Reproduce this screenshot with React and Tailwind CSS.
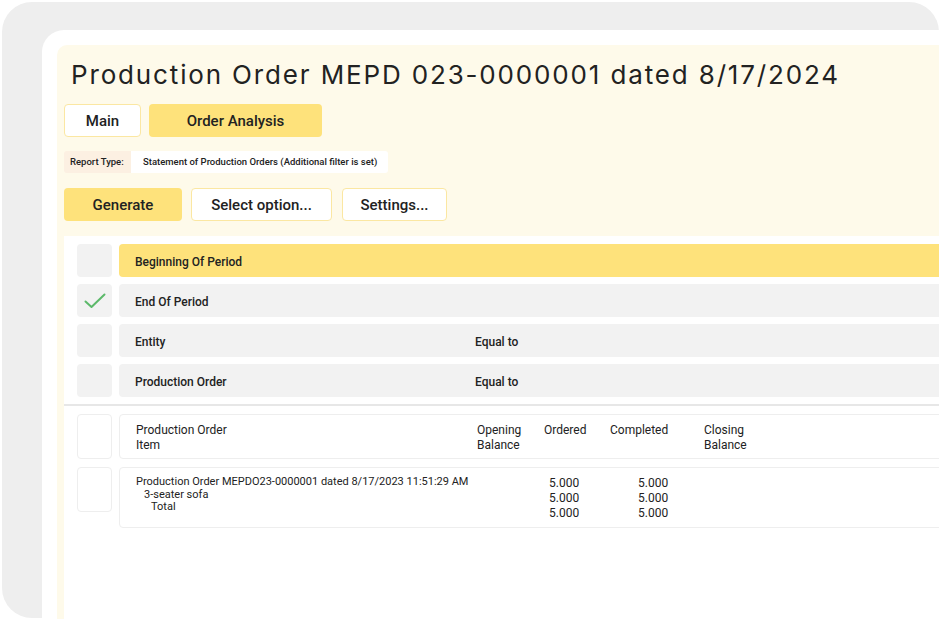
import React from "react";

const rows = [
  { label: "Beginning Of Period", active: true },
  { label: "End Of Period", checked: true },
  { label: "Entity", cond: "Equal to" },
  { label: "Production Order", cond: "Equal to" },
];

const Check = () => (
  <svg width="22" height="16" viewBox="0 0 22 16" fill="none">
    <path d="M1.5 8.5 L7.5 14 L20.5 1.5" stroke="#5cb96a" strokeWidth="2" strokeLinecap="round" strokeLinejoin="round" />
  </svg>
);

const App = () => {
  return (
    <div className="w-[939px] h-[619px] overflow-hidden bg-white pt-[2px] pl-[2px] font-['Roboto',sans-serif] text-[#222]">
      <div className="w-[937px] h-[616px] rounded-[30px] bg-[#eeeeee] pt-[28px] pl-[40px]">
        <div className="w-[900px] h-[600px] rounded-tl-[22px] bg-white pt-[15px] pl-[15px]">
          <div className="w-[890px] h-[580px] rounded-tl-[10px] bg-[#fefaea] pt-[14px] pl-[7px]">
            <h1 className="pl-[7px] font-['Inter',sans-serif] text-[26px] leading-[32px] font-normal tracking-[1.85px] text-[#222]">
              Production Order MEPD 023-0000001 dated 8/17/2024
            </h1>

            <div className="mt-[13px] flex gap-[8px]">
              <button className="w-[77px] h-[33px] pt-[2px] rounded-[4px] border border-[#fbe7a2] bg-white text-[15px] font-medium">
                Main
              </button>
              <button className="w-[173px] h-[33px] pt-[2px] rounded-[4px] bg-[#fee27b] text-[15px] font-medium">
                Order Analysis
              </button>
            </div>

            <div className="mt-[14px] flex h-[22px] text-[9.5px] font-medium">
              <div className="w-[67px] flex items-center pl-[6px] bg-[#fcf0e2] rounded-l-[3px]">Report Type:</div>
              <div className="w-[257px] flex items-center pl-[12px] bg-white rounded-r-[3px] whitespace-nowrap">
                Statement of Production Orders (Additional filter is set)
              </div>
            </div>

            <div className="mt-[15px] flex">
              <button className="w-[118px] h-[33px] pt-[2px] rounded-[4px] bg-[#fee27b] text-[15px] font-medium">
                Generate
              </button>
              <button className="ml-[9px] w-[141px] h-[33px] pt-[2px] rounded-[4px] border border-[#fbe7a2] bg-white text-[15px] font-medium">
                Select option...
              </button>
              <button className="ml-[10px] w-[105px] h-[33px] pt-[2px] rounded-[4px] border border-[#fbe7a2] bg-white text-[15px] font-medium">
                Settings...
              </button>
            </div>

            <div className="mt-[15px] h-[400px] bg-white pt-[8px]">
              <div className="flex flex-col gap-[7px] pl-[13px]">
                {rows.map((r) => (
                  <div key={r.label} className="flex gap-[7px]">
                    <div className="w-[35px] h-[33px] rounded-[4px] bg-[#f2f2f2] flex items-center justify-center">
                      {r.checked && <Check />}
                    </div>
                    <div
                      className={
                        r.active
                          ? "flex-1 h-[33px] pt-[2px] rounded-l-[4px] bg-[#fee27b] flex items-center pl-[16px] text-[12px] font-medium"
                          : "flex-1 h-[33px] pt-[2px] rounded-l-[4px] bg-[#f2f2f2] flex items-center pl-[16px] text-[12px] font-medium"
                      }
                    >
                      <span className="w-[340px]">{r.label}</span>
                      {r.cond && <span>{r.cond}</span>}
                    </div>
                  </div>
                ))}
              </div>

              <div className="mt-[7px] h-[2px] bg-[#e7e7e7]" />

              <div className="mt-[8px] pl-[13px] flex gap-[7px]">
                <div className="w-[35px] h-[45px] rounded-[4px] border border-[#eeeeee]" />
                <div className="flex-1 h-[45px] rounded-l-[4px] border border-[#eeeeee] pl-[16px] pt-[8px] flex text-[12px] leading-[15px]">
                  <div className="w-[341px]">Production Order<br />Item</div>
                  <div className="w-[67px]">Opening<br />Balance</div>
                  <div className="w-[66px]">Ordered</div>
                  <div className="w-[94px]">Completed</div>
                  <div>Closing<br />Balance</div>
                </div>
              </div>

              <div className="mt-[8px] pl-[13px] flex gap-[7px] items-start">
                <div className="w-[35px] h-[45px] rounded-[4px] border border-[#eeeeee]" />
                <div className="flex-1 h-[61px] rounded-l-[4px] border border-[#eeeeee] pl-[16px] pt-[8px] flex">
                  <div className="w-[408px] text-[11px] leading-[12.5px]">
                    <div>Production Order MEPDO23-0000001 dated 8/17/2023 11:51:29 AM</div>
                    <div className="pl-[8px]">3-seater sofa</div>
                    <div className="pl-[15px]">Total</div>
                  </div>
                  <div className="w-[66px] pl-[5px] text-[12px] leading-[15px]">
                    <div>5.000</div>
                    <div>5.000</div>
                    <div>5.000</div>
                  </div>
                  <div className="pl-[28px] text-[12px] leading-[15px]">
                    <div>5.000</div>
                    <div>5.000</div>
                    <div>5.000</div>
                  </div>
                </div>
              </div>
            </div>
          </div>
        </div>
      </div>
    </div>
  );
};

export default App;
